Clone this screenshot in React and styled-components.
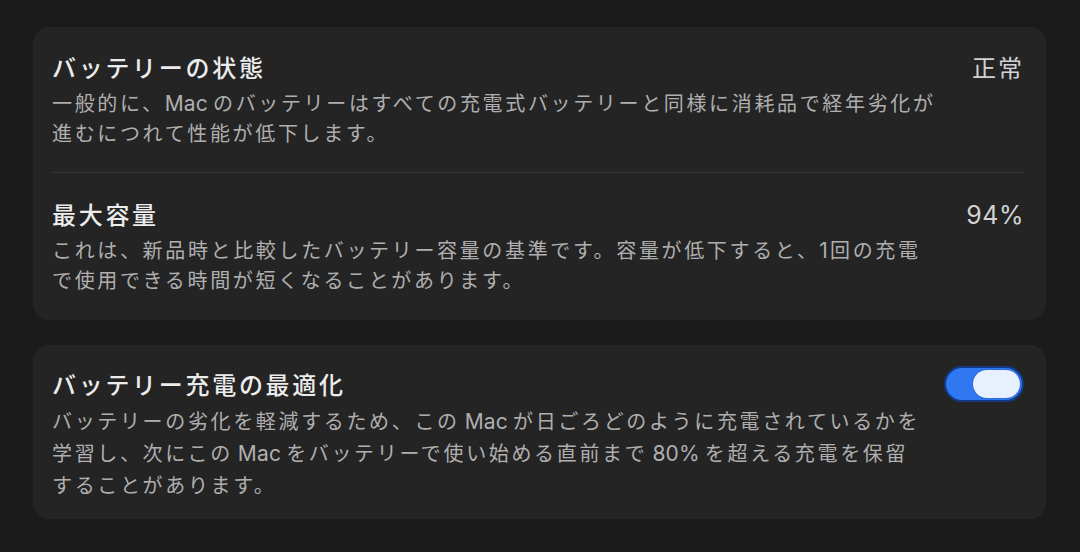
import React from 'react';
import styled, { createGlobalStyle } from 'styled-components';

const GlobalStyle = createGlobalStyle`
  html, body {
    margin: 0;
    padding: 0;
    background: #1b1b1c;
  }
  body {
    font-family: "Noto Sans CJK JP", "Noto Sans", sans-serif;
    -webkit-font-smoothing: antialiased;
  }
`;

const Page = styled.div`
  width: 1080px;
  height: 552px;
  box-sizing: border-box;
  padding: 27px 34px 0 33px;
  display: flex;
  flex-direction: column;
  gap: 25px;
  overflow: hidden;
`;

const Card = styled.section`
  background: #242425;
  border-radius: 16px;
  padding: 0 22px 0 19px;
  display: flex;
  flex-direction: column;
`;

const Row = styled.div`
  display: flex;
  align-items: flex-start;
  justify-content: space-between;
  gap: 20px;
  padding: ${(p) => p.$pad || '24px 0 24px'};

  & + & {
    border-top: 1px solid #353536;
  }
`;

const Text = styled.div`
  display: flex;
  flex-direction: column;
`;

const Title = styled.div`
  font-size: 24px;
  line-height: 32px;
  font-weight: 500;
  letter-spacing: 2.7px;
  color: #ececec;
  margin-bottom: 5px;
`;

const Desc = styled.div`
  font-size: 20px;
  line-height: ${(p) => p.$leading || 30}px;
  letter-spacing: 2.65px;
  color: #afafaf;
  white-space: nowrap;
`;

// latin words sit tighter than the kana around them
const Latin = styled.span`
  font-family: Inter, "Noto Sans", sans-serif;
  font-size: 21px;
  line-height: 1;
  letter-spacing: 0.2px;
  margin: 0 ${(p) => (p.$tight ? 2 : 5)}px 0 ${(p) => (p.$lead ? 5 : 0)}px;
`;

const Value = styled.div`
  font-size: 24px;
  line-height: 32px;
  letter-spacing: 2px;
  color: #d2d2d2;
  white-space: nowrap;
`;

const Number = styled.span`
  font-family: Inter, "Noto Sans", sans-serif;
  font-size: 25px;
  letter-spacing: 0.5px;
`;

const Switch = styled.div`
  flex: none;
  margin-top: -2px;
  width: 80px;
  height: 36px;
  box-sizing: border-box;
  border-radius: 18px;
  background: #2f78f2;
  border: 2px solid #123a86;
  display: flex;
  align-items: center;
  justify-content: ${(p) => (p.$on ? 'flex-end' : 'flex-start')};
  padding: 0 2px;
`;

const Knob = styled.div`
  width: 47px;
  height: 28px;
  border-radius: 14px;
  background: #e8f0fe;
  box-shadow: 0 0 2px rgba(0, 0, 0, 0.35);
`;

export default function App() {
  return (
    <>
      <GlobalStyle />
      <Page>
        <Card>
          <Row>
            <Text>
              <Title>バッテリーの状態</Title>
              <Desc>
                一般的に、<Latin>Mac</Latin>のバッテリーはすべての充電式バッテリーと同様に消耗品で経年劣化が
                <br />
                進むにつれて性能が低下します。
              </Desc>
            </Text>
            <Value>正常</Value>
          </Row>
          <Row $pad="25px 0 25px">
            <Text>
              <Title>最大容量</Title>
              <Desc>
                これは、新品時と比較したバッテリー容量の基準です。容量が低下すると、<Latin $tight>1</Latin>回の充電
                <br />
                で使用できる時間が短くなることがあります。
              </Desc>
            </Text>
            <Value>
              <Number>94%</Number>
            </Value>
          </Row>
        </Card>
        <Card>
          <Row $pad="23px 0 18px">
            <Text>
              <Title>バッテリー充電の最適化</Title>
              <Desc $leading={32}>
                バッテリーの劣化を軽減するため、この<Latin $lead>Mac</Latin>が日ごろどのように充電されているかを
                <br />
                学習し、次にこの<Latin $lead>Mac</Latin>をバッテリーで使い始める直前まで<Latin $lead>80%</Latin>を超える充電を保留
                <br />
                することがあります。
              </Desc>
            </Text>
            <Switch $on role="switch" aria-checked="true">
              <Knob />
            </Switch>
          </Row>
        </Card>
      </Page>
    </>
  );
}
